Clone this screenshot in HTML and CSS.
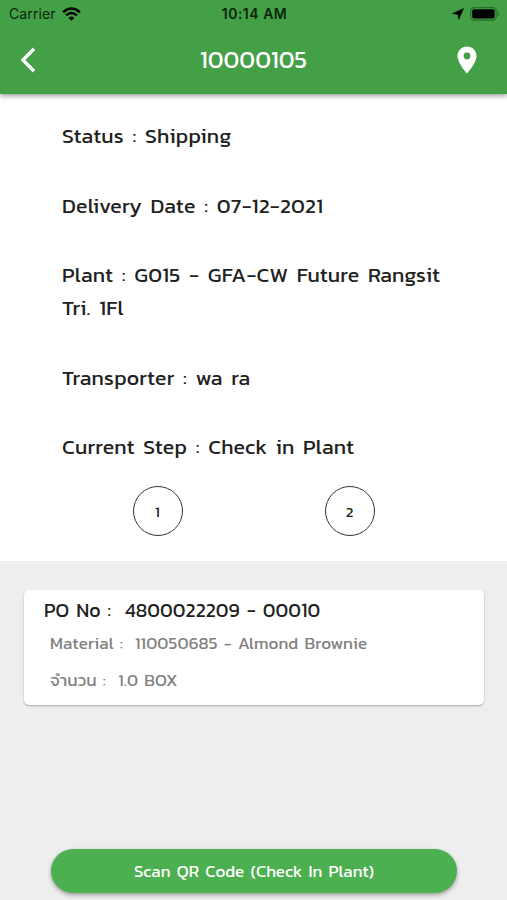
FILE: index.html
```
<!DOCTYPE html>
<html lang="th">
<head>
    <meta charset="UTF-8">
    <meta name="viewport" content="width=device-width, initial-scale=1.0">
    <title>Shipment 10000105</title>
    <link rel="stylesheet" href="styles.css">
</head>
<body>
    <header class="header">
        <div class="status-bar">
            <div class="carrier">
                <span>Carrier</span>
                <svg width="19" height="14" viewBox="0 0 19 14" fill="none" stroke="#000" stroke-width="2.5">
                    <path d="M1.1 5.2 Q9.5 -2.2 17.9 5.2"/>
                    <path d="M4.1 8.4 Q9.5 3.6 14.9 8.4"/>
                    <path d="M6.6 10.9 Q9.5 8.2 12.4 10.9 L9.5 13.8 Z" fill="#000" stroke="none"/>
                </svg>
            </div>
            <div class="time">10:14 AM</div>
            <div class="indicators">
                <svg width="12" height="12" viewBox="0 0 12 12">
                    <path d="M11.5 .5 L6.8 11.5 L5.8 6.4 L.5 5.6 Z" fill="#000" stroke="#000" stroke-width=".5"/>
                </svg>
                <svg width="30" height="14" viewBox="0 0 30 14">
                    <rect x=".6" y=".6" width="25.6" height="12.6" rx="3.6" fill="none" stroke="#286b2b" stroke-width="1.2"/>
                    <rect x="2.2" y="2.3" width="22.4" height="9.2" rx="1.8" fill="#000"/>
                    <path d="M27.7 4.6 Q30.6 7 27.7 9.4 Z" fill="#286b2b"/>
                </svg>
            </div>
        </div>
        <div class="nav">
            <svg class="back" width="16" height="26" viewBox="0 0 16 26" fill="none" stroke="#fff" stroke-width="3.4">
                <path d="M14 1.8 L3 13 L14 24.2"/>
            </svg>
            <h1>10000105</h1>
            <svg class="pin" width="20" height="28" viewBox="0 0 20 28">
                <path fill="#fff" fill-rule="evenodd" d="M10 .5 C4.6 .5 .5 4.7 .5 10 C.5 17 10 27.5 10 27.5 S19.5 17 19.5 10 C19.5 4.7 15.4 .5 10 .5 Z M10 6.6 A3.4 3.4 0 1 1 10 13.4 A3.4 3.4 0 1 1 10 6.6 Z"/>
            </svg>
        </div>
    </header>

    <section class="details">
        <p>Status : Shipping</p>
        <p>Delivery Date : 07-12-2021</p>
        <p>Plant : G015 - GFA-CW Future Rangsit <span class="branch">Tri. 1Fl</span></p>
        <p>Transporter : wa ra</p>
        <p class="current">Current Step : Check in Plant</p>
        <div class="steps">
            <span class="step">1</span>
            <span class="step">2</span>
        </div>
    </section>

    <main class="orders">
        <div class="card">
            <h2>PO No :&nbsp; 4800022209 - 00010</h2>
            <p>Material :&nbsp; 110050685 - Almond Brownie</p>
            <p class="amount">จำนวน :&nbsp; 1.0 BOX</p>
        </div>
        <button class="scan">Scan QR Code (Check In Plant)</button>
    </main>
</body>
</html>
```
FILE: styles.css
```
* {
    box-sizing: border-box;
}

body {
    margin: 0;
    height: 900px;
    display: flex;
    flex-direction: column;
    overflow: hidden;
    font-family: Kanit, 'Noto Sans', 'DejaVu Sans', sans-serif;
    background-color: #eee;
    color: #212121;
}

h1, h2, p {
    margin: 0;
    font-weight: normal;
    white-space: nowrap;
}

svg {
    display: block;
}

.header {
    position: relative;
    height: 94px;
    flex: none;
    background-color: #43a047;
    box-shadow: 0 2px 5px rgba(0, 0, 0, 0.4);
}

.status-bar {
    display: grid;
    grid-template-columns: 1fr auto 1fr;
    align-items: center;
    height: 27px;
    padding: 0 7px 0 9px;
    font-family: Inter, sans-serif;
    font-size: 14px;
    color: #0b250c;
}

.carrier, .indicators {
    display: flex;
    align-items: center;
    gap: 6px;
}

.carrier {
    letter-spacing: 0.1px;
}

.time {
    font-weight: 600;
    letter-spacing: 0.5px;
}

.indicators {
    justify-content: flex-end;
}

.nav {
    display: grid;
    grid-template-columns: 60px 1fr 60px;
    align-items: center;
    height: 65px;
    color: #fff;
}

.nav h1 {
    font-size: 24.3px;
    text-align: center;
}

.back {
    margin-left: 20px;
}

.pin {
    margin-left: 10px;
}

.details {
    height: 467px;
    flex: none;
    padding: 25px 62px 0;
    background-color: #fff;
}

.details p {
    margin-bottom: 36.5px;
    font-size: 21.3px;
    line-height: 33px;
    letter-spacing: 0.2px;
    word-spacing: 3.5px;
}

.details .current {
    margin-bottom: 23px;
}

.branch {
    display: block;
}

.steps {
    display: grid;
    grid-template-columns: 1fr 1fr;
    column-gap: 1px;
    justify-items: center;
}

.step {
    display: flex;
    align-items: center;
    justify-content: center;
    width: 50px;
    height: 50px;
    border: 1.5px solid #333;
    border-radius: 50%;
    font-size: 15px;
}

.orders {
    flex: 1;
    display: flex;
    flex-direction: column;
    justify-content: space-between;
    padding: 29px 23px 7px 24px;
}

.card {
    height: 115px;
    padding: 5px 20px;
    border-radius: 5px;
    background-color: #fff;
    box-shadow: 0 1px 2px rgba(0, 0, 0, 0.3);
}

.card h2 {
    font-size: 19.5px;
    line-height: 31px;
    letter-spacing: 0.1px;
    word-spacing: 2.3px;
}

.card p {
    padding-left: 6px;
    font-size: 17px;
    line-height: 34px;
    letter-spacing: 0.15px;
    word-spacing: 2px;
    color: #808080;
}

.card .amount {
    margin-top: 3px;
}

.scan {
    width: 406px;
    height: 44px;
    margin: 0 27px;
    padding: 0;
    border: none;
    border-radius: 22px;
    background-color: #4caf50;
    box-shadow: 0 2px 4px rgba(0, 0, 0, 0.35);
    color: #fff;
    font-family: inherit;
    font-size: 17px;
    word-spacing: 2.4px;
}
```
